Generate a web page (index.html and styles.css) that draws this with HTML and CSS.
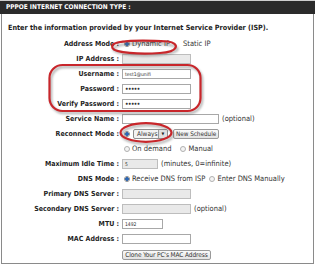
FILE: index.html
```html
<!DOCTYPE html>
<html lang="en">
<head>
    <meta charset="UTF-8">
    <title>PPPoE Internet Connection Type</title>
    <link rel="stylesheet" href="styles.css">
</head>
<body>
    <div class="panel">
        <div class="panel-head">PPPOE INTERNET CONNECTION TYPE :</div>

        <div class="panel-body">
            <p class="intro">Enter the information provided by your Internet Service Provider (ISP).</p>

            <div class="row">
                <span class="label">Address Mode :</span>
                <span class="field">
                    <span class="radio on"></span><span class="opt">Dynamic IP</span>
                    <span class="opt gap">Static IP</span>
                </span>
            </div>
            <div class="row">
                <span class="label">IP Address :</span>
                <span class="field"><span class="box off"></span></span>
            </div>
            <div class="row">
                <span class="label">Username :</span>
                <span class="field"><span class="box">test1@unifi</span></span>
            </div>
            <div class="row">
                <span class="label">Password :</span>
                <span class="field"><span class="box dots">&bull;&bull;&bull;&bull;&bull;</span></span>
            </div>
            <div class="row">
                <span class="label">Verify Password :</span>
                <span class="field"><span class="box dots">&bull;&bull;&bull;&bull;&bull;</span></span>
            </div>
            <div class="row">
                <span class="label">Service Name :</span>
                <span class="field"><span class="box wide"></span><span class="note">(optional)</span></span>
            </div>
            <div class="row">
                <span class="label">Reconnect Mode :</span>
                <span class="field">
                    <span class="radio on"></span>
                    <span class="select">Always<span class="arrow">&#9660;</span></span>
                    <span class="btn">New Schedule</span>
                </span>
            </div>
            <div class="row">
                <span class="label"></span>
                <span class="field">
                    <span class="radio"></span><span class="opt">On demand</span>
                    <span class="radio gap"></span><span class="opt">Manual</span>
                </span>
            </div>
            <div class="row">
                <span class="label">Maximum Idle Time :</span>
                <span class="field"><span class="box off short">5</span><span class="note">(minutes, 0=infinite)</span></span>
            </div>
            <div class="row">
                <span class="label">DNS Mode :</span>
                <span class="field">
                    <span class="radio on"></span><span class="opt">Receive DNS from ISP</span>
                    <span class="radio gap-s"></span><span class="opt">Enter DNS Manually</span>
                </span>
            </div>
            <div class="row">
                <span class="label">Primary DNS Server :</span>
                <span class="field"><span class="box off"></span></span>
            </div>
            <div class="row">
                <span class="label">Secondary DNS Server :</span>
                <span class="field"><span class="box off"></span><span class="note">(optional)</span></span>
            </div>
            <div class="row">
                <span class="label">MTU :</span>
                <span class="field"><span class="box mtu">1492</span></span>
            </div>
            <div class="row">
                <span class="label">MAC Address :</span>
                <span class="field"><span class="box"></span></span>
            </div>
            <div class="row last">
                <span class="label"></span>
                <span class="field"><span class="btn clone">Clone Your PC's MAC Address</span></span>
            </div>
        </div>

        <!-- red marker annotations drawn over the form -->
        <svg class="marks" width="315" height="265" viewBox="0 0 315 265">
            <g class="shadow" transform="translate(1.5 2)">
                <ellipse cx="144" cy="47" rx="32" ry="6.2"/>
                <rect x="49.5" y="65" width="151" height="46" rx="13"/>
                <ellipse cx="146" cy="132.5" rx="25.5" ry="9.3"/>
            </g>
            <g class="ring">
                <path d="M121 42 C 130 40.5, 152 40.5, 168 41.5 C 180 43, 179 52, 160 53 C 140 54.5, 115 53, 112.5 48 C 111 44.5, 115 42.5, 123 41.5"/>
                <rect x="49.5" y="65" width="151" height="46" rx="13"/>
                <ellipse cx="146" cy="132.5" rx="25.5" ry="9.3"/>
            </g>
        </svg>
    </div>
</body>
</html>
```

FILE: styles.css
```css
* {
    margin: 0;
    padding: 0;
    box-sizing: border-box;
}

body {
    width: 315px;
    height: 265px;
    overflow: hidden;
    background: #fff;
    font-family: 'DejaVu Sans Condensed', 'DejaVu Sans', sans-serif;
    color: #1e1e1e;
}

/* panel frame */
.panel {
    position: relative;
    width: 315px;
    height: 265px;
    border-top: 1px solid #cfcfcf;
}

.panel-head {
    height: 13px;
    background: #2b2b2b;
    color: #fff;
    font-size: 6.5px;
    font-weight: bold;
    line-height: 13px;
    padding-left: 6px;
}

.panel-body {
    width: 313px;
    height: 250px;
    border: 1px solid #8a8a8a;
    border-top: none;
    margin-left: 1px;
    padding-left: 1px;
}

.intro {
    font-size: 7.2px;
    font-weight: bold;
    line-height: 12px;
    padding: 8px 0 0 5px;
    margin-bottom: 2px;
}

/* form rows */
.row {
    display: grid;
    grid-template-columns: 116px 1fr;
    column-gap: 3px;
    height: 15px;
    align-items: center;
}

.row.last {
    height: 18px;
}

.label {
    text-align: right;
    font-size: 7px;
    font-weight: bold;
    white-space: nowrap;
}

.field {
    display: flex;
    align-items: center;
    font-size: 7.5px;
    white-space: nowrap;
}

.box {
    width: 69px;
    height: 10px;
    border: 1px solid #a8a8a8;
    background: #fff;
    font-size: 5px;
    line-height: 8px;
    padding-left: 2px;
    color: #333;
}

.box.off {
    background: #e9e9e9;
    border-color: #bdbdbd;
}

.box.wide {
    width: 97px;
}

.box.short {
    width: 36px;
}

.box.mtu {
    width: 41px;
}

.box.dots {
    font-size: 6px;
    font-weight: bold;
    letter-spacing: -0.5px;
}

.note {
    margin-left: 3px;
    color: #333;
}

.opt {
    margin-left: 2px;
    color: #333;
}

.opt.gap {
    margin-left: 13px;
}

/* radios */
.radio {
    width: 6px;
    height: 6px;
    border-radius: 50%;
    border: 1px solid #b0b0b0;
    background: #f4f4f4;
    margin-left: 2px;
    flex-shrink: 0;
}

.radio.on {
    background: radial-gradient(circle, #2a67b8 0 1.6px, #fff 1.9px);
    border-color: #8a8a8a;
}

.radio.gap {
    margin-left: 9px;
}

.radio.gap-s {
    margin-left: 4px;
}

.select {
    display: flex;
    align-items: center;
    justify-content: space-between;
    width: 35px;
    height: 10px;
    margin-left: 3px;
    border: 1px solid #8f8f8f;
    border-radius: 2px;
    background: #f3f3f3;
    padding-left: 3px;
    font-size: 6.5px;
    color: #333;
}

.arrow {
    width: 9px;
    height: 8px;
    background: #e0e0e0;
    border-left: 1px solid #9a9a9a;
    font-size: 4px;
    line-height: 8px;
    text-align: center;
    color: #222;
}

.btn {
    height: 10px;
    margin-left: 5px;
    padding: 0 2px;
    border: 1px solid #9a9a9a;
    border-radius: 2px;
    background: linear-gradient(#fafafa, #e2e2e2);
    font-size: 6.3px;
    line-height: 8px;
    color: #333;
}

.btn.clone {
    width: 89px;
    margin-left: 0;
    padding: 0;
    text-align: center;
    font-size: 6.5px;
    letter-spacing: -0.1px;
}

/* annotation overlay */
.marks {
    position: absolute;
    top: -1px;
    left: 0;
    pointer-events: none;
}

.marks .shadow ellipse,
.marks .shadow rect {
    fill: none;
    stroke: rgba(90, 90, 90, 0.45);
    stroke-width: 2.5;
    filter: blur(1px);
}

.marks .ring path,
.marks .ring rect,
.marks .ring ellipse {
    fill: none;
    stroke: #c8262b;
    stroke-width: 2.2;
    stroke-linecap: round;
}
```
